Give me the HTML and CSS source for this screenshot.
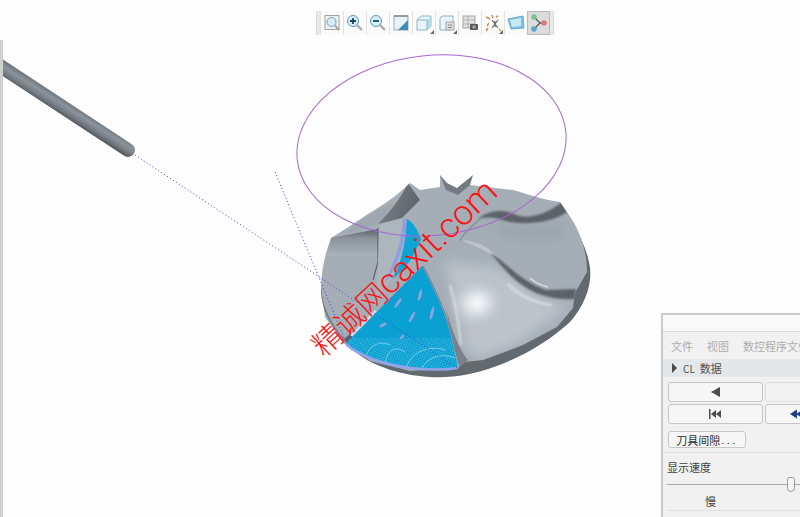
FILE: index.html
```html
<!DOCTYPE html>
<html lang="zh">
<head>
<meta charset="utf-8">
<title>CL 数据</title>
<link rel="stylesheet" href="styles.css">
</head>
<body>
<div class="app">
  <svg class="scene" width="800" height="517" viewBox="0 0 800 517">
    <defs>
      <linearGradient id="toolGrad" gradientUnits="userSpaceOnUse" x1="74" y1="105.500" x2="66" y2="118">
        <stop offset="0" stop-color="#6e767d"/>
        <stop offset="0.35" stop-color="#8b949c"/>
        <stop offset="0.72" stop-color="#727a81"/>
        <stop offset="1" stop-color="#50565b"/>
      </linearGradient>
      <linearGradient id="wallGrad" x1="0" y1="0" x2="0" y2="1">
        <stop offset="0" stop-color="#5a6169"/>
        <stop offset="0.35" stop-color="#8b939b"/>
        <stop offset="1" stop-color="#abb3ba"/>
      </linearGradient>
      <linearGradient id="bladeGrad" x1="0" y1="0" x2="1" y2="0.3">
        <stop offset="0" stop-color="#7a8188"/>
        <stop offset="1" stop-color="#5f666c"/>
      </linearGradient>
      <radialGradient id="glow">
        <stop offset="0" stop-color="#f8fbfc"/>
        <stop offset="0.35" stop-color="#dbe1e5"/>
        <stop offset="1" stop-color="#b0b8bf" stop-opacity="0"/>
      </radialGradient>
      <pattern id="dots" width="2.400" height="2.400" patternUnits="userSpaceOnUse" patternTransform="rotate(20)">
        <rect width="1" height="1" fill="#6fcdee"/>
      </pattern>
      <filter id="soft" x="-20%" y="-20%" width="140%" height="140%"><feGaussianBlur stdDeviation="1.200"/></filter>
      <filter id="softer" x="-30%" y="-30%" width="160%" height="160%"><feGaussianBlur stdDeviation="6"/></filter>
      <filter id="fine" x="-5%" y="-5%" width="110%" height="110%"><feGaussianBlur stdDeviation="0.500"/></filter>
      <clipPath id="bodyClip"><path d="M321,287 C322,265 326,252 331,238 L350,226 C365,215 385,205 400,192 L410,183 L420,190 L440,187 L440,175 L447,183 L457,188 L473,175 L470,185 L513,190 C530,195 545,200 560,202 L567,212 C580,230 587,250 587,272 L575,293 L573,308 L557,327 L523,345 L483,360 L465,362 L458,368 L410,371 L370,361 L343,343 L325,317 Z"/></clipPath>
      <clipPath id="blueClip"><path d="M422,266 C432,285 444,310 450,332 C453,345 456,358 458,368 C430,372 395,368 370,358 C360,354 352,349 346,343 Z"/></clipPath>
    </defs>

    <!-- cutter -->
    <line class="tool" x1="-6" y1="62" x2="128" y2="150"/>

    <!-- impeller -->
    <path class="rim" d="M321,287 C320,310 335,340 367,360 C395,375 425,378 445,377 C490,375 540,350 570,322 C585,305 592,285 590,268 C586,240 570,218 555,205 L440,240 Z"/>
    <path class="body" d="M321,287 C322,265 326,252 331,238 L350,226 C365,215 385,205 400,192 L410,183 L420,190 L440,187 L440,175 L447,183 L457,188 L473,175 L470,185 L513,190 C530,195 545,200 560,202 L567,212 C580,230 587,250 587,272 L575,293 L573,308 L557,327 L523,345 L483,360 L465,362 L458,368 L410,371 L370,361 L343,343 L325,317 Z"/>
    <g clip-path="url(#bodyClip)">
      <path class="face" filter="url(#softer)" d="M445,262 L500,268 L545,302 L570,305 L520,342 L480,358 L465,350 C462,320 452,290 445,262 Z"/>
      <ellipse cx="477" cy="303" rx="32" ry="28" fill="url(#glow)"/>
      <path class="shade" filter="url(#softer)" d="M490,222 C510,228 540,232 560,222 L565,236 C540,242 515,240 500,234 Z"/>
      <!-- blade walls -->
      <path fill="url(#bladeGrad)" d="M408,183 L420,200 L402,218 L378,224 C388,214 400,200 408,183 Z"/>
      <path class="hump" d="M353,226 C370,214 385,206 395,203 L378,224 L345,235 Z"/>
      <path fill="url(#wallGrad)" d="M331,238 L378,229 L378,256 L328,256 Z"/>
      <path class="seam" d="M378,228 L378,262 L373,280"/>
      <path class="wing" d="M379,225 L404,218 L408,240 L395,275 L376,298 L378,262 Z"/>
      <path class="vee" d="M440,175 L447,183 L457,188 L473,175 L470,185 L458,195 L446,190 Z"/>
      <path class="groove" filter="url(#soft)" d="M478,219 C488,210 505,209 514,214 C523,219 542,218 562,202 L567,212 C550,224 520,226 502,220 C494,217 486,217 478,219 Z"/>
      <path class="hubline" d="M480,219 C472,226 464,233 460,240 L466,242"/>
      <path class="lip" d="M460,240 C476,240 490,248 500,258 L490,254 C480,248 470,244 460,240 Z"/>
      <path class="groove" filter="url(#soft)" d="M490,252 C507,264 522,282 546,290 L576,289 L575,299 C555,300 535,296 518,282 C506,272 498,262 490,252 Z"/>
      <path class="sheen soft" filter="url(#soft)" d="M508,284 C520,296 535,303 552,305"/>
      <path class="sheen thin" filter="url(#fine)" d="M530,278 C536,283 542,286 548,287"/>
      <!-- lower wall beside cut -->
      <path class="sheen pale" filter="url(#soft)" d="M450,285 C456,305 459,325 461,345"/>
      <path class="sliver" filter="url(#fine)" d="M446,308 C451,328 458,348 468,360 L460,366 C454,345 449,325 446,308 Z"/>
      <path class="undercut" d="M343,340 L364,322 L370,326 L350,346 Z"/>
      <path class="gleam" filter="url(#fine)" d="M350,335 L375,310 L379,314 L356,339 Z"/>
      <path class="darkedge" d="M322,300 C328,322 340,338 355,350" />
    </g>
    <!-- machined cut -->
    <path class="strip" d="M403,218 C402,240 395,262 384,282 L389,278 C400,260 405,240 408,220 Z"/>
    <path class="stripblue" d="M407,219 C413,222 418,230 421,240 L412,258 C405,268 398,275 392,279 C402,262 406,240 407,219 Z"/>
    <path class="cut" d="M422,266 C432,285 444,310 450,332 C453,345 456,358 458,368 C430,372 395,368 370,358 C360,354 352,349 346,343 Z"/>
    <g clip-path="url(#blueClip)">
      <rect x="340" y="338" width="125" height="37" fill="url(#dots)" class="dotfield"/>
      <path class="contour" d="M405,372 C410,350 430,345 445,350 M420,372 C425,358 440,352 455,358 M385,368 C385,350 395,345 405,352 M365,360 C368,345 380,340 390,345"/>
      <ellipse class="flake" cx="398" cy="303" rx="1.500" ry="6" transform="rotate(35 398 303)"/>
      <ellipse class="flake" cx="420" cy="295" rx="1.500" ry="6" transform="rotate(15 420 295)"/>
      <ellipse class="flake" cx="432" cy="313" rx="1.500" ry="7" transform="rotate(15 432 313)"/>
      <ellipse class="flake" cx="412" cy="317" rx="1.500" ry="6" transform="rotate(30 412 317)"/>
      <ellipse class="flake" cx="383" cy="325" rx="1.500" ry="4" transform="rotate(60 383 325)"/>
      <ellipse class="flake" cx="402" cy="337" rx="1.200" ry="3" transform="rotate(50 402 337)"/>
      <ellipse class="flake" cx="447" cy="317" rx="1" ry="5" transform="rotate(-10 447 317)"/>
    </g>
    <path class="cutedge" d="M346,344 C352,350 360,354 370,358 C395,368 430,372 458,368"/>
    <path class="cutside" d="M423,266 C433,285 445,310 451,332 C454,345 457,358 460,366"/>

    <!-- tool path -->
    <ellipse class="orbit" cx="431.500" cy="145.500" rx="135" ry="90" transform="rotate(-6 431.500 145.500)"/>
    <line class="path" x1="135" y1="155" x2="460" y2="370"/>
    <line class="path" x1="275" y1="172" x2="345" y2="340"/>

    <!-- watermark -->
    <text class="mark" x="324" y="358" transform="rotate(-43 324 358)"><tspan class="mark-cjk">精诚网</tspan>caxit.com</text>
  </svg>

  <header class="topbar">
    <nav class="toolbar">
      <span class="grip"></span>
      <span class="tbtn"><svg width="20" height="20" viewBox="0 0 20 20"><rect x="3" y="2.500" width="14" height="14" fill="#f1f1f1" stroke="#a0a0a0"/><circle cx="9.500" cy="9" r="4.500" fill="#d6edf7" stroke="#7d9db2"/><path d="M13,12.500 L17,17" stroke="#a8a8a8" stroke-width="2"/></svg></span>
      <span class="tbtn"><svg width="20" height="20" viewBox="0 0 20 20"><circle cx="8" cy="8" r="5.500" fill="#d9eff8" stroke="#5b97b8"/><path d="M5,8 H11 M8,5 V11" stroke="#17476b" stroke-width="1.800"/><path d="M12,12 L17,17" stroke="#a8a8a8" stroke-width="2.200"/></svg></span>
      <span class="tbtn"><svg width="20" height="20" viewBox="0 0 20 20"><circle cx="8" cy="8" r="5.500" fill="#d9eff8" stroke="#5b97b8"/><path d="M5,8 H11" stroke="#17476b" stroke-width="1.800"/><path d="M12,12 L17,17" stroke="#a8a8a8" stroke-width="2.200"/></svg></span>
      <span class="tbtn"><svg width="20" height="20" viewBox="0 0 20 20"><rect x="3" y="3" width="14" height="14" fill="#e6f3f8" stroke="#a5a5a5"/><path d="M17,7 V17 H7 Z" fill="#3d8eb6"/><path d="M3,3 H17" stroke="#8a8a8a" stroke-width="1.500"/></svg></span>
      <span class="tbtn tick"><svg width="20" height="20" viewBox="0 0 20 20"><path d="M3,7 L7,3 H17 V13 L13,17 H3 Z" fill="#e6f5fa" stroke="#8db4c8"/><path d="M13,7 L17,3 V13 L13,17 Z" fill="#b4dcec"/><path d="M3,7 H13 V17" fill="none" stroke="#8db4c8"/></svg></span>
      <span class="tbtn tick"><svg width="20" height="20" viewBox="0 0 20 20"><path d="M3,5 L5,3 H16 V15 L14,17 H3 Z" fill="#e6f5fa" stroke="#8db4c8"/><rect x="9" y="9" width="8" height="8" fill="#dcdcdc" stroke="#a8a8a8"/><path d="M11,12 H15 M11,14.500 H15" stroke="#8a8a8a"/></svg></span>
      <span class="tbtn"><svg width="20" height="20" viewBox="0 0 20 20"><rect x="3" y="3" width="12" height="12" fill="#e2e2e2" stroke="#a5a5a5"/><path d="M3,7 H15 M3,11 H15 M8,3 V15" stroke="#b2b2b2"/><rect x="10" y="11" width="8" height="6" rx="1" fill="#5a5a5a"/><circle cx="14" cy="14" r="1.800" fill="#a5a5a5"/></svg></span>
      <span class="tbtn tick"><svg width="20" height="20" viewBox="0 0 20 20"><path d="M3,4 L7,6 M9,2 L10,5 M13,4 L15,3 M4,13 L6,10 M3,18 L5,15 M16,16 L18,18" stroke="#b9975a" stroke-width="1.500"/><path d="M9,7 L15,15 M15,7 L9,15 M12,8 V14" stroke="#6a6a55" stroke-width="1.200"/></svg></span>
      <span class="tbtn"><svg width="20" height="20" viewBox="0 0 20 20"><path d="M2,6 L17,3 L18,15 L5,16 Z" fill="#7cc2e2" stroke="#6fabc8"/><path d="M4,7 L15,5 L15,13 L6,14 Z" fill="#c9e9f5"/></svg></span>
      <span class="tbtn active"><svg width="20" height="20" viewBox="0 0 20 20"><path d="M5,4 L11,10 L5,16 M11,10 H16" fill="none" stroke="#50565b" stroke-width="1.300"/><circle cx="5" cy="4" r="2.800" fill="#7cc08a"/><circle cx="15" cy="10" r="2.800" fill="#dc7a7c"/><circle cx="5" cy="16" r="2.800" fill="#5ba6cf"/></svg></span>
      <span class="grip"></span>
    </nav>
  </header>
  <div class="viewport"></div>

  <section class="panel">
    <div class="titlebar"></div>
    <div class="menubar"><span>文件</span><span>视图</span><span>数控程序文件</span></div>
    <div class="cl-row"><span class="caret"></span><span class="cl-text">CL</span><span>数据</span></div>
    <div class="controls">
      <div class="btn-grid">
        <button class="btn"><svg width="12" height="12" viewBox="0 0 12 12"><path class="g-grey" d="M10,1 V11 L1,6 Z"/></svg></button>
        <button class="btn off"></button>
        <button class="btn"><svg width="16" height="12" viewBox="0 0 16 12"><path class="g-grey" d="M1,1 H2.500 V11 H1 Z M3,6 L8,2 V10 Z M8,6 L13,2 V10 Z"/></svg></button>
        <button class="btn lead"><svg width="18" height="12" viewBox="0 0 18 12"><path class="g-blue" d="M0,6 L7,1.500 V10.500 Z M6,6 L13,1.500 V10.500 Z"/></svg></button>
      </div>
      <button class="btn gap-btn">刀具间隙<span class="dots">...</span></button>
    </div>
    <div class="speed">
      <div class="speed-label">显示速度</div>
      <div class="slider"><span class="thumb"></span></div>
      <div class="slow">慢</div>
    </div>
  </section>
</div>
</body>
</html>
```
FILE: styles.css
```css
* { box-sizing: border-box; }
html, body { margin: 0; padding: 0; }
body {
  width: 800px;
  height: 517px;
  overflow: hidden;
  background: #fdfdfe;
  font-family: "Noto Sans CJK SC", "Liberation Sans", sans-serif;
}
.app {
  position: relative;
  width: 800px;
  height: 517px;
  display: flex;
  flex-direction: column;
  overflow: hidden;
}
.scene { position: absolute; left: 0; top: 0; }

/* top toolbar */
.topbar {
  position: relative;
  height: 40px;
  padding: 11px 0 0 316px;
}
.toolbar {
  display: inline-flex;
  height: 24px;
  width: 238px;
  background: #f1f1f1;
  border-right: 1px solid #dcdcdc;
  border-left: 1px solid #dcdcdc;
}
.grip { width: 3px; background: #e9e9e9; }
.tbtn {
  position: relative;
  width: 23px;
  height: 24px;
  display: flex;
  align-items: center;
  justify-content: center;
  background: #fbfbfb;
  border-left: 1px solid #e2e2e2;
}
.tbtn.tick::after {
  content: "";
  position: absolute;
  right: 1px;
  bottom: 1px;
  border-style: solid;
  border-width: 0 0 4px 4px;
  border-color: transparent transparent #666 transparent;
}
.tbtn.active { background: #dcdcdc; border: 1px solid #b9b9b9; }

/* graphics window */
.viewport { flex: 1; position: relative; border-left: 3px solid #cfd0d0; }
.tool { stroke: url(#toolGrad); stroke-width: 14; stroke-linecap: round; }
.rim { fill: #62696f; }
.body { fill: #a5aeb6; }
.face { fill: #bcc4ca; }
.shade { fill: #8f98a0; opacity: 0.5; }
.hump { fill: #9fa8b0; }
.seam { fill: none; stroke: #4b5157; stroke-width: 1; }
.wing { fill: #aeb6bd; }
.vee { fill: #737a81; }
.groove { fill: #5b6268; }
.lip { fill: #bcc3c9; }
.hubline { fill: none; stroke: #848c93; stroke-width: 1.200; }
.sheen { fill: none; stroke: #e4e9ec; stroke-width: 2; }
.sheen.thin { stroke-width: 1.300; opacity: 0.85; }
.sheen.soft { stroke: #d6dde1; stroke-width: 2.500; }
.sheen.pale { stroke: #d9dfe3; stroke-width: 2; }
.sliver { fill: #7a8188; }
.undercut { fill: #596067; }
.gleam { fill: #d5dbe6; }
.darkedge { fill: none; stroke: #727980; stroke-width: 1.500; }
.strip { fill: #8f9fe0; }
.stripblue { fill: #0fa3d6; }
.cut { fill: #0ba0d2; }
.contour { fill: none; stroke: #9fdcf2; stroke-width: 0.700; }
.dotfield { opacity: 0.8; }
.flake { fill: #8ea3dd; }
.cutedge { fill: none; stroke: #93a4ec; stroke-width: 2.500; }
.cutside { fill: none; stroke: #6f8190; stroke-width: 1.200; }
.orbit { fill: none; stroke: #a568d2; stroke-width: 1; }
.path { stroke: #3b3bea; stroke-width: 1; stroke-dasharray: 1 2.500; }
.mark {
  fill: #fb1414;
  font-family: Roboto, "Noto Sans CJK SC", sans-serif;
  font-size: 35px;
  font-weight: 300;
}
.mark-cjk { font-family: "Noto Sans CJK SC", sans-serif; font-size: 30px; font-weight: 200; }

/* floating panel */
.panel {
  position: absolute;
  left: 661px;
  top: 313px;
  width: 260px;
  height: 210px;
  background: #f1f1f1;
  border-left: 2px solid #c9caca;
  border-top: 2px solid #c9caca;
  font-size: 11px;
  color: #3d3d3d;
}
.titlebar { height: 17px; background: #fafafa; border-bottom: 1px solid #d8d8d8; }
.menubar {
  height: 27px;
  display: flex;
  align-items: center;
  gap: 14px;
  padding-left: 8px;
  color: #aeaeae;
}
.cl-row {
  height: 18px;
  display: flex;
  align-items: center;
  gap: 5px;
  padding-left: 9px;
  background: #e4e7e9;
  font-size: 11px;
  color: #505050;
}
.cl-text { font-size: 10px; margin-left: 1px; }
.caret {
  width: 0;
  height: 0;
  border-style: solid;
  border-width: 5px 0 5px 5px;
  border-color: transparent transparent transparent #4a4a4a;
}
.controls {
  padding: 5px 0 5px 5px;
  height: 76px;
  border-bottom: 1px solid #e0e0e0;
}
.btn-grid {
  display: grid;
  grid-template-columns: 95px 95px;
  grid-auto-rows: 20px;
  gap: 2px;
}
.btn {
  display: flex;
  align-items: center;
  justify-content: center;
  padding: 0;
  background: #f6f6f6;
  border: 1px solid #c6c6c6;
  border-radius: 3px;
  font-family: inherit;
  font-size: 11px;
  color: #2c2c2c;
}
.btn.off { background: #f2f2f2; border-color: #dedede; }
.btn.lead { justify-content: flex-start; padding-left: 24px; }
.gap-btn {
  width: 78px;
  height: 17px;
  margin-top: 7px;
}
.dots { letter-spacing: 2.500px; margin-left: 1px; font-family: "Liberation Sans", sans-serif; }
.g-grey { fill: #4d4d4d; }
.g-blue { fill: #1c3f86; }
.speed { padding: 6px 0 0 4px; }
.speed-label { height: 17px; line-height: 17px; font-size: 11px; color: #404040; }
.slider {
  height: 16px;
  margin-top: 1px;
  width: 134px;
  display: flex;
  background: linear-gradient(#a9a9a9, #a9a9a9) left 7px / 100% 1px no-repeat;
}
.thumb {
  width: 8px;
  height: 15px;
  margin-left: 120px;
  background: #f4f4f4;
  border: 1px solid #9b9b9b;
  border-radius: 3px 3px 5px 5px;
}
.slow {
  padding-left: 38px;
  height: 18px;
  line-height: 17px;
  font-size: 11px;
  color: #404040;
  border-bottom: 1px solid #e0e0e0;
}
```
